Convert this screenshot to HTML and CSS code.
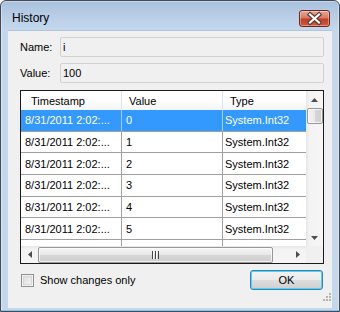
FILE: index.html
```html
<!DOCTYPE html>
<html lang="en">
<head>
  <meta charset="UTF-8">
  <title>History</title>
  <link rel="stylesheet" href="styles.css">
</head>
<body>

<div class="window">
  <div class="titlebar">
    <span class="title">History</span>
    <span class="close-btn">
      <svg width="29" height="15" viewBox="0 0 29 15">
        <path d="M10 3.5 L19 11.5 M19 3.5 L10 11.5" stroke="#5a3b35" stroke-width="4.4" stroke-linecap="square" fill="none"/>
        <path d="M10 3.5 L19 11.5 M19 3.5 L10 11.5" stroke="#fff" stroke-width="2.2" stroke-linecap="square" fill="none"/>
      </svg>
    </span>
  </div>

  <div class="client">
    <div class="field">
      <span class="field-label">Name:</span>
      <div class="textbox">i</div>
    </div>
    <div class="field">
      <span class="field-label">Value:</span>
      <div class="textbox">100</div>
    </div>

    <div class="listview">
      <div class="lv-content">
        <div class="lv-header">
          <div class="hcell c1">Timestamp</div>
          <div class="hcell c2">Value</div>
          <div class="hcell c3">Type</div>
        </div>
        <div class="lv-row selected">
          <div class="cell c1">8/31/2011 2:02:...</div>
          <div class="cell c2">0</div>
          <div class="cell c3">System.Int32</div>
        </div>
        <div class="lv-row">
          <div class="cell c1">8/31/2011 2:02:...</div>
          <div class="cell c2">1</div>
          <div class="cell c3">System.Int32</div>
        </div>
        <div class="lv-row">
          <div class="cell c1">8/31/2011 2:02:...</div>
          <div class="cell c2">2</div>
          <div class="cell c3">System.Int32</div>
        </div>
        <div class="lv-row">
          <div class="cell c1">8/31/2011 2:02:...</div>
          <div class="cell c2">3</div>
          <div class="cell c3">System.Int32</div>
        </div>
        <div class="lv-row">
          <div class="cell c1">8/31/2011 2:02:...</div>
          <div class="cell c2">4</div>
          <div class="cell c3">System.Int32</div>
        </div>
        <div class="lv-row">
          <div class="cell c1">8/31/2011 2:02:...</div>
          <div class="cell c2">5</div>
          <div class="cell c3">System.Int32</div>
        </div>
        <div class="lv-row">
          <div class="cell c1"></div>
          <div class="cell c2"></div>
          <div class="cell c3"></div>
        </div>
      </div>

      <div class="vscroll">
        <div class="sb-btn">
          <svg width="7" height="4" viewBox="0 0 7 4"><polygon points="0,4 7,4 3.5,0" fill="#4e4e4e"/></svg>
        </div>
        <div class="vthumb"></div>
        <div class="sb-track"></div>
        <div class="sb-btn">
          <svg width="7" height="4" viewBox="0 0 7 4"><polygon points="0,0 7,0 3.5,4" fill="#4e4e4e"/></svg>
        </div>
      </div>

      <div class="hscroll">
        <div class="sb-btn">
          <svg width="4" height="7" viewBox="0 0 4 7"><polygon points="4,0 4,7 0,3.5" fill="#4e4e4e"/></svg>
        </div>
        <div class="hthumb"><span class="grip-lines"></span></div>
        <div class="sb-track"></div>
        <div class="sb-btn">
          <svg width="4" height="7" viewBox="0 0 4 7"><polygon points="0,0 0,7 4,3.5" fill="#4e4e4e"/></svg>
        </div>
      </div>
      <div class="sb-corner"></div>
    </div>

    <div class="bottom">
      <label class="check"><span class="check-box"></span>Show changes only</label>
      <span class="ok-btn">OK</span>
    </div>

    <svg class="size-grip" width="10" height="10" viewBox="0 0 10 10">
      <rect x="7" y="0" width="2" height="2" fill="#b4b4b4"/>
      <rect x="4" y="3" width="2" height="2" fill="#b4b4b4"/>
      <rect x="7" y="3" width="2" height="2" fill="#b4b4b4"/>
      <rect x="1" y="6" width="2" height="2" fill="#b4b4b4"/>
      <rect x="4" y="6" width="2" height="2" fill="#b4b4b4"/>
      <rect x="7" y="6" width="2" height="2" fill="#b4b4b4"/>
    </svg>
  </div>
</div>

</body>
</html>
```

FILE: styles.css
```css
* { box-sizing: border-box; }
body { margin:0; background:#fff; font-family:"Liberation Sans", Arial, sans-serif; font-size:11px; color:#000; }

/* window frame */
.window { width:340px; height:312px; display:flex; flex-direction:column; padding:0 7px 3px; border:1px solid #434b57; border-radius:6px 6px 0 0; background:linear-gradient(#a9c1de, #bcd0e8 18px, #c3d7ed 29px, #c3d7ed); box-shadow:inset 0 0 0 1px rgba(255,255,255,.35), inset 0 -3px 0 -2px #4fa3d8; }
.titlebar { height:29px; display:flex; justify-content:space-between; align-items:flex-start; }
.title { font-size:12px; margin:10px 0 0 4px; color:#000; }
.close-btn { display:flex; align-items:center; justify-content:center; width:31px; height:17px; margin:9px 2px 0 0; border:1px solid #6f2a1e; border-radius:3px; background:linear-gradient(#e8a89a, #d97a64 45%, #c23f26 55%, #cf5a3c); box-shadow:inset 0 0 0 1px rgba(255,255,255,.35); }

/* client area */
.client { flex:1; position:relative; padding:6px 8px 0 12px; background:#f0f0f0; border:1px solid #b2c5dc; border-width:1px 0 0 0; }
.field { display:flex; align-items:center; height:20px; margin-bottom:6px; }
.field + .field { margin-bottom:7px; }
.field-label { width:40px; }
.textbox { flex:1; height:20px; padding:3px 0 0 2px; border:1px solid #d2d2d2; border-radius:2px; background:#f0f0f0; }

/* list view */
.listview { height:174px; display:grid; grid-template-columns:285px 17px; grid-template-rows:155px 17px; border:1px solid #1b1b1b; background:#fff; }
.lv-content { overflow:hidden; }
.lv-header { display:flex; height:19px; background:linear-gradient(#fff, #fff 45%, #f4f5f7); }
.hcell { display:flex; align-items:center; border-right:1px solid #e1e3e6; white-space:nowrap; }
.hcell.c1 { padding-left:10px; }
.hcell.c2, .hcell.c3 { padding-left:7px; }
.hcell.c3 { border-right:none; }
.c1 { width:101px; }
.c2 { width:101px; }
.c3 { width:83px; }
.lv-row { display:flex; height:21.67px; border-bottom:1px solid #a0a0a0; }
.cell { display:flex; align-items:center; white-space:nowrap; overflow:hidden; border-right:1px solid #a0a0a0; }
.cell.c1 { padding-left:4px; }
.cell.c2 { padding-left:4px; }
.cell.c3 { padding-left:2px; border-right:none; }
.lv-row.selected { background:#3399ff; color:#fff; }
.lv-row.selected .cell { border-right-color:#a6cdf5; }

/* scroll bars */
.vscroll { grid-row:1; grid-column:2; display:flex; flex-direction:column; background:linear-gradient(to right, #e6e6e6, #f3f3f3 20%, #f6f6f6); }
.hscroll { grid-row:2; grid-column:1; display:flex; background:linear-gradient(#e6e6e6, #f3f3f3 20%, #f6f6f6); }
.sb-btn { flex:none; width:17px; height:17px; display:flex; align-items:center; justify-content:center; }
.sb-track { flex:1; }
.vthumb { flex:none; height:16px; margin:0 0 0 1px; border:1px solid #979797; border-radius:2px; background:linear-gradient(to right, #f5f5f5, #e8e8e8 50%, #d6d6d6 51%, #cfcfcf); box-shadow:inset 0 0 0 1px rgba(255,255,255,.7); }
.hthumb { flex:none; width:235px; margin-top:1px; display:flex; align-items:center; justify-content:center; border:1px solid #979797; border-radius:2px; background:linear-gradient(#f5f5f5, #e8e8e8 50%, #d6d6d6 51%, #cfcfcf); box-shadow:inset 0 0 0 1px rgba(255,255,255,.7); }
.grip-lines { width:7px; height:8px; background:repeating-linear-gradient(to right, #444 0 1px, #fff 1px 2px, transparent 2px 3px); }
.sb-corner { grid-row:2; grid-column:2; background:#f0f0f0; }

/* bottom row */
.bottom { display:flex; justify-content:space-between; align-items:center; height:20px; margin-top:6px; }
.check { display:flex; align-items:center; gap:6px; margin-left:1px; }
.check-box { width:13px; height:13px; border:1px solid #8f8f8f; background:linear-gradient(135deg, #d9d9d9, #f7f7f7); box-shadow:inset 0 0 0 1px #f4f4f4, inset 0 0 0 2px #d6d6d6; }
.ok-btn { display:flex; align-items:center; justify-content:center; width:73px; height:20px; margin-right:1px; border:1px solid #3c7fb1; border-radius:3px; background:linear-gradient(#f2f2f2, #ebebeb 50%, #dddddd 51%, #cfcfcf); box-shadow:inset 0 0 0 1px #48d8fb; }
.size-grip { position:absolute; right:0; bottom:5px; }
```
